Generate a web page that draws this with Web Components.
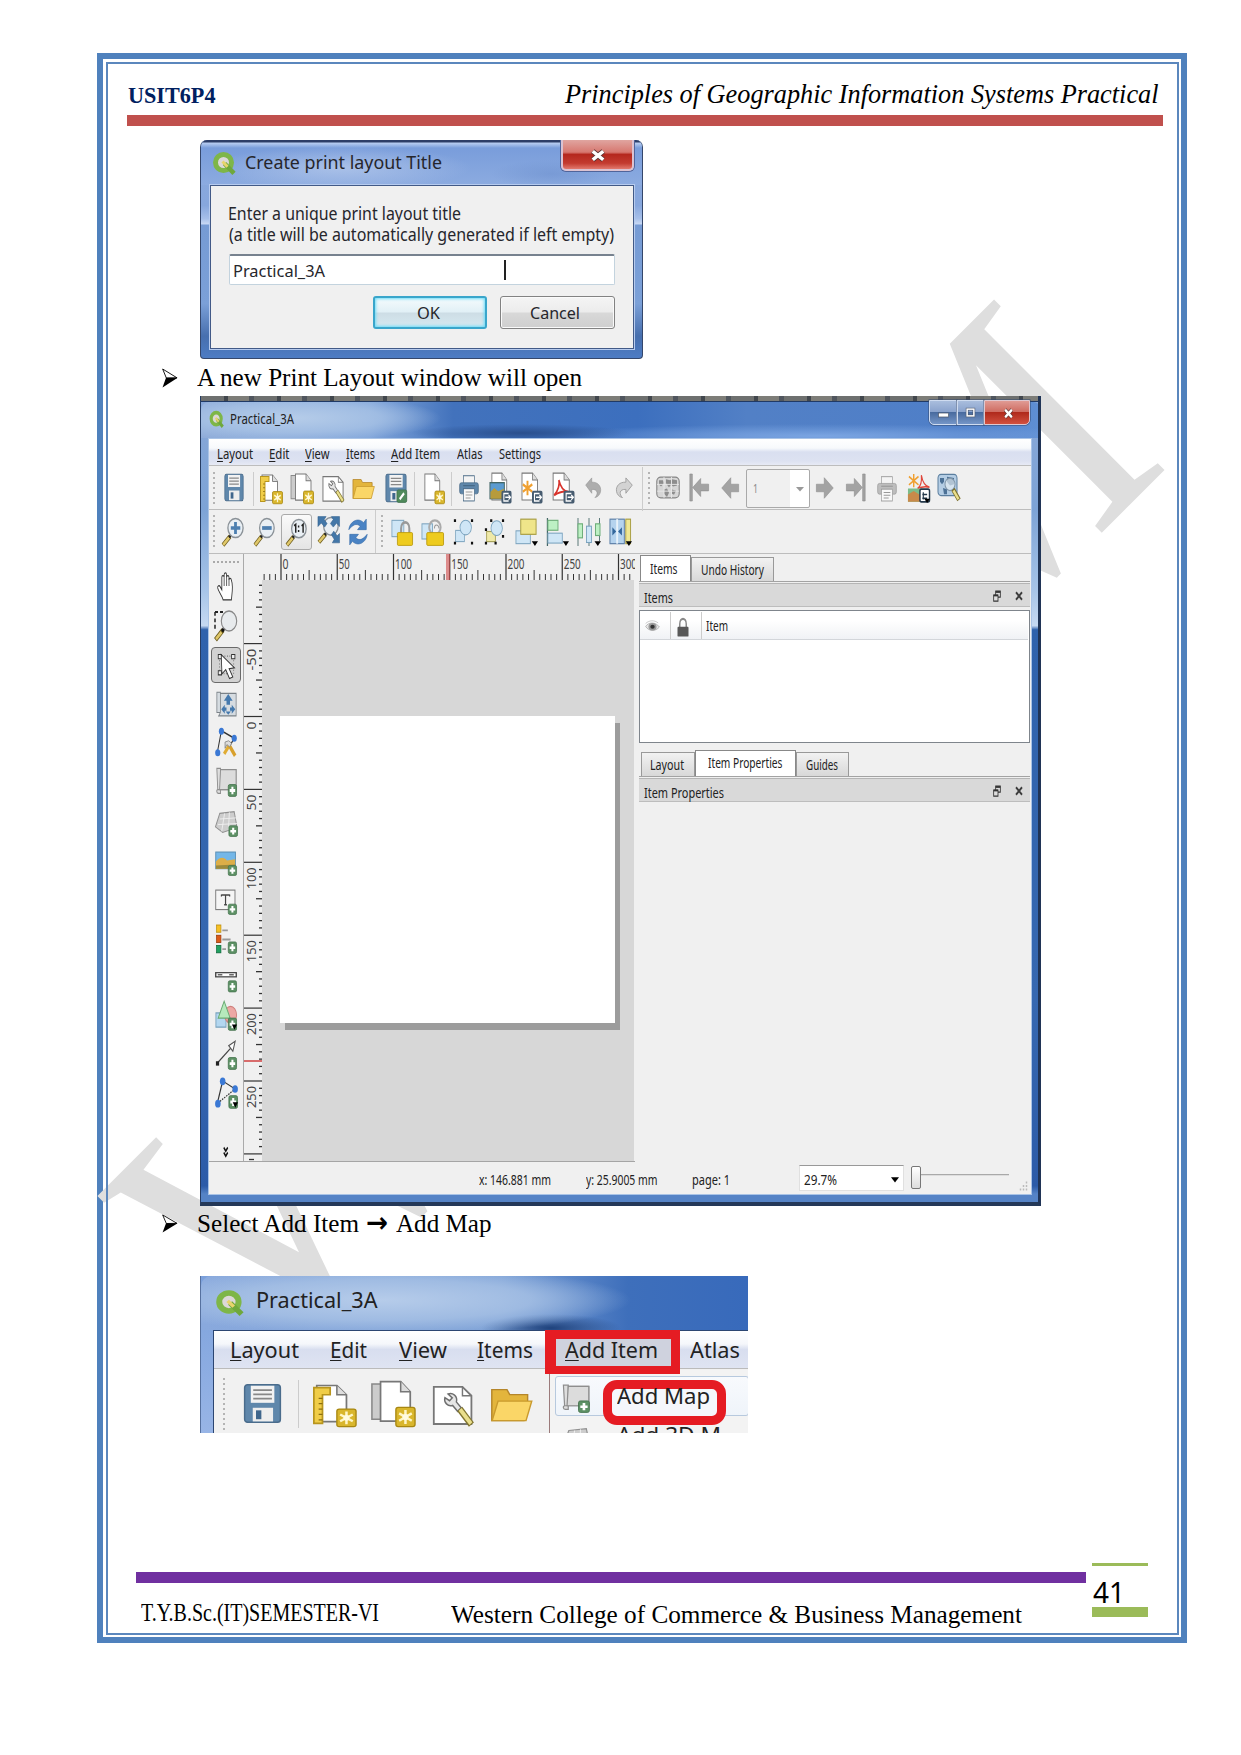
<!DOCTYPE html>
<html lang="en">
<head>
<meta charset="utf-8">
<title>USIT6P4</title>
<style>
html,body{margin:0;background:#fff}
body{width:1241px;height:1755px;overflow:hidden;font-family:"Liberation Serif",serif;color:#000}
</style>
</head>
<body>
<doc-page></doc-page>
<script>
/* Text squeezed or stretched horizontally to an exact width. */
class FitText extends HTMLElement{
  connectedCallback(){
    const s=+this.getAttribute('size'),w=+this.getAttribute('w');
    this.attachShadow({mode:'open'}).innerHTML=`<style>:host{display:block;flex:none;width:${w}px;height:${s}px;line-height:${s}px;font-size:${s}px;white-space:nowrap}
      span{display:inline-block;transform-origin:0 0}</style><span><slot></slot></span>`;
    const sp=this.shadowRoot.querySelector('span');
    const n=sp.getBoundingClientRect().width;
    if(n) sp.style.transform=`scaleX(${w/n})`;
  }
}
customElements.define('fit-text',FitText);

const SERIF='"Liberation Serif",serif', SANS='"Noto Sans","Open Sans",sans-serif';
const BASE={[SERIF]:.3375,[SANS]:.388};
/* Text item: left, width, baseline, size */
const T=(x,w,base,size,text,o={})=>{
  const f=o.f||SANS;
  return {x,w,y:base-size*(.5+BASE[f]),html:m=>`<fit-text w="${w}" size="${size}" style='${m};font-family:${f};${o.s||''}'>${text}</fit-text>`};
};
const I=(name,x,y,w,h)=>({x,y,w,html:m=>`<ui-icon name="${name}" style="${m};width:${w}px;height:${h}px"></ui-icon>`});
const B=(x,y,w,h,css,inner='')=>({x,y,w,html:m=>`<div style="${m};flex:none;box-sizing:border-box;width:${w}px;height:${h}px;${css}">${inner}</div>`});
/* Lays items left to right inside a flex row whose origin is (x0,y0). */
const row=(x0,y0,items)=>{let c=x0;return items.map(i=>{const m=`margin-left:${i.x-c}px;margin-top:${i.y-y0}px`;c=i.x+i.w;return i.html(m)}).join('')};
const R=(x0,y0,w,h,css,items)=>`<div style="display:flex;align-items:flex-start;flex:none;box-sizing:border-box;width:${w}px;height:${h}px;${css}">${row(x0,y0,items)}</div>`;

const plus='<rect x="14.5" y="14" width="9" height="9.5" rx="1.5" fill="#5d9165" stroke="#41704a" stroke-width=".7"/><path d="M19 15.8v6M16 18.8h6" stroke="#fff" stroke-width="2.2"/>';
const plusD=plus+'<path d="M18.5 19h5.5l-2.7 4z" fill="#000"/>';
const star='<rect x="13.5" y="14" width="10" height="9.8" rx="1.2" fill="#d9b62c" stroke="#a88710" stroke-width=".7"/><path d="M18.5 15.3v7.2M15.2 17l6.6 3.8M21.8 17l-6.6 3.8" stroke="#fff6c8" stroke-width="1.3"/><circle cx="18.5" cy="18.9" r="1.6" fill="#fffbe0"/>';
const exp='<rect x="13" y="14" width="10.5" height="9.7" rx="1.5" fill="#475c70"/><path d="M20.5 16.2h-5v5.5h5M17 19h5.2M20.4 17.2l2 1.8-2 1.8" stroke="#fff" stroke-width="1.1" fill="none"/>';
const page='<path d="M3 .8h10.5l5 5.2v15H3z" fill="#fff" stroke="#777" stroke-width=".9"/><path d="M13.5.8V6h5" fill="#ddd" stroke="#777" stroke-width=".8"/>';
const floppy='<rect x="1" y="1" width="22" height="22" rx="1.8" fill="#5f87ab" stroke="#4a6c8c" stroke-width=".9"/><rect x="4.8" y="1.6" width="14.5" height="10" fill="#f2f2f2"/><path d="M6.3 4.2h11.5M6.3 6.7h11.5M6.3 9.2h11.5" stroke="#888" stroke-width="1"/><rect x="6" y="14.5" width="12.5" height="8" fill="#eee"/><rect x="8" y="16" width="3.3" height="5.2" fill="#3f668c"/>';
const lens='<path d="M9 15.5l-7 7" stroke="#6b5a1c" stroke-width="3.8"/><path d="M8.2 16.3l-6 6" stroke="#e0c86a" stroke-width="2.3"/><path d="M10 14.3l-2 2" stroke="#222" stroke-width="2.2"/><circle cx="14.5" cy="8.8" r="7.6" fill="#e9eff4" stroke="#8a9197" stroke-width="1.3"/>';
const printer=(c,d)=>`<rect x="5.5" y="1.5" width="13" height="8" fill="#f4f4f4" stroke="${d}" stroke-width=".8"/><rect x=".8" y="7.5" width="22.4" height="9.5" rx="2" fill="${c}" stroke="${d}" stroke-width=".7"/><path d="M5 10h14" stroke="${d}"/><rect x="5.5" y="12.6" width="13" height="10.5" fill="#f8f8f8" stroke="${d}" stroke-width=".8"/><path d="M8 15.5h8M8 18h8M8 20.5h6" stroke="#999" stroke-width=".9"/>`;
const arrow='fill="#a3a3a3" stroke="#8a8a8a" stroke-width=".6"';
const blue='fill="#cfe6f6" stroke="#7ba3be" stroke-width=".9"';
const drop='<path d="M17.5 20h6.5l-3.2 4z" fill="#000"/>';
const ICONS={
 q:'<circle cx="11.5" cy="11.5" r="8" fill="#ddd8d8" stroke="#7eb648" stroke-width="5"/><path d="M12.5 12.5l9.5 9.8" stroke="#6fa83c" stroke-width="4.6"/><path d="M10.5 10.5l5 5.2" stroke="#e8d46c" stroke-width="3"/>',
 save:floppy,
 saveas:floppy+'<rect x="13" y="13.5" width="10.7" height="10" rx="1.5" fill="#4f8a5b" stroke="#376a42" stroke-width=".6"/><path d="M16 21l4.8-4.8" stroke="#fff" stroke-width="2"/>',
 newlayout:page+'<path d="M1.5 2h8.5v4H6v16H1.5z" fill="#f0cd48" stroke="#b8951d" stroke-width=".9"/><path d="M4 8h2M4 11h2M4 14h2M4 17h2M4 20h2" stroke="#8a6e10" stroke-width=".7"/>'+star,
 dup:'<path d="M1 2h14v18H1z" fill="#ccc" stroke="#888" stroke-width=".8"/><g transform="translate(2.5 0)">'+page+'</g>'+star,
 manager:'<path d="M1 3.5h16l5 4.5v14.500H1z" fill="#fff" stroke="#777"/><path d="M17 3.500V8h5" fill="none" stroke="#777" stroke-width=".8"/><path d="M9 7.2c2.500-1 5.500 1.200 4.600 4l2.700 3-2 1.800-2.800-3c-2.700.8-5-1.600-4.300-4l2.600 1.600 1.500-1.500z" fill="#e6e6e6" stroke="#6e6e6e" stroke-width=".8"/><path d="M15.500 14.800l6.500 8" stroke="#81752f" stroke-width="3.600"/><path d="M15.700 15l6 7.300" stroke="#eadf8c" stroke-width="2.100"/>',
 folder:'<path d="M1 3.500h8.500l1.500 3h10v4l-2 12H1z" fill="#e3b53c" stroke="#b5862a" stroke-width=".8"/><path d="M4.500 10.500H23.300l-3.200 12H1.200z" fill="#fad667" stroke="#c99a2d" stroke-width=".8"/>',
 newpage:page+star,
 print:printer('#5f87ab','#466784'),
 printg:printer('#bdbdbd','#999'),
 eximg:page+'<rect x="1" y="8" width="15" height="12" fill="#5b9bd0" stroke="#466"/><path d="M1.500 20v-5l4-3 4 2.500 6-2V20z" fill="#b79b3c"/>'+exp,
 exsvg:page+'<path d="M8.500 6.500v11M3.800 9.300l9.500 5.500M13.300 9.300l-9.500 5.500" stroke="#f0a030" stroke-width="1.900"/>'+exp,
 expdf:page+'<path d="M4 17.500C8 14 9.500 9 8.500 6c1.500 5 4 8.500 9 8.800-5-.6-9 .3-13.500 2.700z" fill="none" stroke="#d8332c" stroke-width="1.500"/>'+exp,
 undo:'<path d="M1 9.500L9.500 2v4.500C18 6 23 10.500 22 16c-.6 3-3.500 6-8 6.500 4.500-3 5-9-4.500-8.500V18z" fill="#adadad" stroke="#929292" stroke-width=".7"/>',
 redo:'<path d="M23 9.500L14.500 2v4.500C6 6 1 10.500 2 16c.6 3 3.500 6 8 6.500C5.500 19.500 5 13.500 14.500 14V18z" fill="#d3d3d3" stroke="#9a9a9a" stroke-width="1"/>',
 map:'<rect x=".8" y="2" width="22.400" height="20" rx="4" fill="#d6d6d6" stroke="#858585" stroke-width="1.100"/><path d="M3 5h4l1 3-3 3-2-2M10 4l4 1 2-1 5 1v5l-4 1-2-2-2 3-3-4zM8 14l3-1 2 4-2 4-3-3zM16 14l4 1-2 4-2-1z" fill="#8d8d8d"/><path d="M1 9h22M1 15.500h22M8 2v20M15.500 2v20" stroke="#e8e8e8" stroke-width=".9"/>',
 first:`<path d="M1 0h3v24H1z" ${arrow}/><path d="M4.500 12L14 4v5h9.500v6H14v5z" ${arrow}/>`,
 prev:`<path d="M1 12L13 2.500v6h10.500v7H13v6z" ${arrow}/>`,
 next:`<path d="M23 12L11 2.500v6H.5v7H11v6z" ${arrow}/>`,
 last:`<path d="M20 0h3v24h-3z" ${arrow}/><path d="M19.500 12L10 4v5H.5v6H10v5z" ${arrow}/>`,
 atlas:'<path d="M7 0v11M2 2l10 7M12 2L2 9" stroke="#f0a030" stroke-width="1.500"/><path d="M11 12c4-2 4.500-6 4-11 1 5 3 9 8.500 10-5-1-8-.5-12.500 1z" stroke="#e0463a" fill="none" stroke-width="1.200"/><path d="M1 12h14v11H1z" fill="#7bbd8a"/><path d="M1 17l6-3 8 4v5H1z" fill="#c88a4a"/><rect x="13.500" y="12.500" width="10" height="10.500" rx="1.500" fill="#fff" stroke="#24384a" stroke-width="1.500"/><path d="M16 17h5M16 20h5M17 15v6" stroke="#24384a" stroke-width="1.200"/><path d="M18 20.500h6l-3 3.500z" fill="#000"/>',
 atlasz:'<rect x="1" y="1" width="19" height="17" rx="3" fill="#b4cde4" stroke="#5b7e9e"/><path d="M3 4h4v3l-2 2-2-2zM10 3l7 1v5l-4 1-3-3zM6 12l4 1v4H7z" fill="#4c7196"/><circle cx="13" cy="9" r="5" fill="#e8eff5" fill-opacity=".65" stroke="#8095a8"/><path d="M16 13l6 8.500" stroke="#7c702c" stroke-width="4"/><path d="M16.500 14l5 7" stroke="#eadf8c" stroke-width="2.400"/>',
 zin:lens+'<path d="M14.500 4v9.600M9.800 8.800h9.500" stroke="#4d7fb0" stroke-width="2.800"/>',
 zout:lens+'<path d="M9.500 8.800h10" stroke="#4d7fb0" stroke-width="3"/>',
 z11:lens+'<path d="M9.500 6.500l1.700-1.200v7M17.300 6.500l1.600-1.200v7" fill="none" stroke="#222" stroke-width="1.500"/><path d="M14.200 6.300v1.500M14.200 10v1.500" stroke="#222" stroke-width="1.500"/>',
 zfull:lens+'<path d="M1 .5h8.500L7.500 3l3 3.500L8 9.500 4.500 6 1 9zM23.500.5h-8.500L17 3l-3 3.500L17 9.500l3.500-3.500 3 3zM23.500 23v-8L21 17l-3.500-4-2.500 3 3 4-2 3z" fill="#4377a8" stroke="#315f8c" stroke-width=".5"/>',
 refresh:'<path d="M2 10C3 3 12-1 18 4l3-3v9h-9.500l3-3C10 4 6 6 2 10z" fill="#4a83c4" stroke="#3268a6" stroke-width=".6"/><path d="M22 14c-1 7-10 11-16 6l-3 3v-9h9.500l-3 3c4.500 3 8.500 1 12.500-3z" fill="#4a83c4" stroke="#3268a6" stroke-width=".6"/>',
 lock:`<rect x="1" y="2" width="13" height="14" ${blue}/><path d="M11 14V9c0-7 9-7 9 0v5" fill="none" stroke="#999" stroke-width="2.200"/><rect x="7" y="12.500" width="16.500" height="11" rx="1" fill="#eecb1e" stroke="#b8980c" stroke-width=".8"/>`,
 unlock:`<rect x="1" y="5" width="11" height="13" ${blue}/><circle cx="14.500" cy="8" r="6" fill="none" stroke="#aaa" stroke-width="2"/><path d="M14 9c0-4 4-4 5 0" fill="none" stroke="#999"/><rect x="6" y="12.500" width="17.500" height="11" rx="1" fill="#eecb1e" stroke="#b8980c" stroke-width=".8"/>`,
 group:`<rect x="3" y="11" width="10" height="10" ${blue}/><circle cx="14.500" cy="8.500" r="6.500" ${blue}/><path d="M1 1h2.500v2.500H1zM20.500 1H23v2.500h-2.500zM1 21h2.500v2.500H1zM20.500 21H23v2.500h-2.500z" fill="#111"/>`,
 ungroup:`<rect x="3" y="12" width="10" height="9" fill="#efe9a8" stroke="#a59f56"/><circle cx="14.500" cy="9" r="6.500" ${blue}/><path d="M7 1h2.500v2.500H7zM20.500 1H23v2.500h-2.500zM1 9h2.500v2.500H1zM1 21h2.500v2.500H1zM12 21h2.500v2.500H12zM20.500 15H23v2.500h-2.500z" fill="#111"/>`,
 raise:`<rect x="1" y="11" width="15" height="11" ${blue}/><rect x="6" y="1" width="16" height="13" fill="#efe58a" stroke="#a89d42"/>`+drop,
 align:`<path d="M1.500 0v24" stroke="#466" stroke-width="1.300"/><rect x="2" y="2" width="10.500" height="8.500" fill="#bdf0c4" stroke="#6fae7a"/><rect x="2" y="13" width="15" height="8.500" ${blue}/>`+drop,
 distrib:`<path d="M1 0v24M12 0v24M22.500 0v20" stroke="#466" stroke-width=".8"/><rect x="1" y="5" width="4.500" height="12" fill="#bdf0c4" stroke="#6fae7a"/><rect x="9.500" y="7" width="5" height="14" ${blue}/><rect x="18.500" y="5" width="4.500" height="10" fill="#bdf0c4" stroke="#6fae7a"/>`+drop,
 resize:`<rect x="1" y="1" width="15" height="21" fill="#b5d3ee" stroke="#5b7ea6"/><path d="M8.500 1v21" stroke="#e8f2fa" stroke-width="2"/><path d="M7.500 11.500l-4-3.500v7zM9.500 11.500l4-3.500v7z" fill="#34679c"/><rect x="17.500" y="1" width="5" height="21" fill="#f0e894" stroke="#a89d42"/>`+drop,
 hand:'<path d="M8.500 23c-1-3-6-7-6.500-9.500-.3-2 2-2.200 3-.9l2 2.400V5c0-1.800 2.600-1.800 2.800 0V3c0-2 2.700-2 2.900 0v2c.2-1.800 2.700-1.600 2.900 0v2c.3-1.600 2.700-1.400 2.900.4C21 12 19 19 18.500 23z" fill="#fff" stroke="#333" stroke-width="1"/><path d="M9.800 5v7M12.700 4v8M15.600 6v6" stroke="#444" stroke-width=".8"/>',
 lensbox:'<path d="M1 1.500h9M1 1.500V16" fill="none" stroke="#222" stroke-width="1.500" stroke-dasharray="3 2"/><path d="M9 15.500L1.500 23" stroke="#6b5a1c" stroke-width="4"/><path d="M7.500 17.200L2 22.500" stroke="#e0c86a" stroke-width="2.400"/><path d="M10.500 14L8 16.500" stroke="#111" stroke-width="2.800"/><circle cx="15" cy="8.500" r="7.700" fill="#e8ebed" stroke="#888" stroke-width="1.100"/>',
 select:'<path d="M3 3h17v17H3z" fill="none" stroke="#666" stroke-dasharray="1 2"/><path d="M1.500 1.500h4v4h-4zM17.500 1.500h4v4h-4zM1.500 17h4v4h-4z" fill="#eee" stroke="#333"/><path d="M5 1.500l1 18.500 4.500-4 4.500 8.500 4-1.500-4.500-8 6.500-.8z" fill="#fff" stroke="#333" stroke-width="1"/>',
 movec:'<path d="M1 2h4v18H1zM5 3h18v20H3l2-3z" fill="#d6dce1" stroke="#7b8288" stroke-width=".9"/><path d="M14 3.500l5 6h-3V13h-4V9.500H9zM14 22l-3-3h6zM6 17l4-4v2.500h2v3h-2V21zM22 17l-4-4v2.500h-2v3h2V21z" fill="#4579ad"/>',
 node:'<path d="M7 3L2.500 20.500M7 3l14 6M21 9l-4 5" fill="none" stroke="#333" stroke-width="1.100"/><circle cx="7" cy="3.300" r="2.800" fill="#3a78d4"/><circle cx="21" cy="9" r="2.800" fill="#3a78d4"/><circle cx="3" cy="20.500" r="2.800" fill="#3a78d4"/><path d="M10 21.500l6-7.500" fill="none" stroke="#e0ac34" stroke-width="3.200"/><path d="M15 14l7 9" fill="none" stroke="#d8a02c" stroke-width="3.400"/><path d="M11 12l4-1 3 2-2 3-3-2-2 3z" fill="#ddd" stroke="#888" stroke-width=".8"/>',
 addmap:'<path d="M2 1h4v20H3.500C1.500 21 1.500 18 3 18zM6 2h17v16H3.500" fill="#dedede" stroke="#8e8e8e" stroke-width="1"/><path d="M6 2h17v16H5z" fill="#dcdcdc" stroke="#8e8e8e"/>'+plus,
 add3d:'<path d="M5 3l15 -1.500 3 14L8 20 0.500 15z" fill="#cdcdcd" stroke="#909090"/><path d="M5 8l17-1M3 13l20-1M10 3l-3 16M15 2l-1 16" stroke="#f2f2f2" stroke-width=".8"/>'+plus,
 addpic:'<rect x=".8" y="1" width="21.500" height="16" fill="#74b7e8" stroke="#5a8fb5"/><path d="M1 10c5-5 9-4 12-1l9-1v9H1z" fill="#dcae48"/><path d="M1 14l21-1v4H1z" fill="#9a8a3d"/>'+plus,
 addlabel:'<rect x=".8" y="1" width="21" height="18" fill="#f5f5f5" stroke="#777"/><path d="M7 5.500h9M11.500 5.500v9M7 5v2M16 5v2M10 14.500h3" stroke="#444" stroke-width="1.300"/>'+plus,
 addlegend:'<rect x="1.500" y="0" width="5" height="6" fill="#f6c024" stroke="#b98c10" stroke-width=".7"/><rect x="1.500" y="8.500" width="5" height="6" fill="#db5a18" stroke="#983c0c" stroke-width=".7"/><rect x="1.500" y="17" width="5" height="6" fill="#20a060" stroke="#10683c" stroke-width=".7"/><path d="M8 4.500h6M8 12h9M8 20h4" stroke="#9a9a9a" stroke-width="1.500"/>'+plus,
 addscale:'<rect x=".8" y=".8" width="22.400" height="5" fill="#fff" stroke="#444" stroke-width="1.500"/><path d="M3 3.300h5M15.500 3.300h5" stroke="#666" stroke-width="1.700"/><g transform="translate(0 -9) scale(1 1.400)">'+plus+'</g>',
 addshape:`<rect x="1" y="10" width="11" height="11" fill="#b3d7f0" stroke="#7ba3be"/><circle cx="17" cy="11.500" r="6.500" fill="#eda8a4" stroke="#ce7f7b"/><path d="M10 1L16.500 14h-13z" fill="#b6eabc" stroke="#6aab73"/>`+plusD,
 addarrow:'<path d="M2.500 18.500L19 5" stroke="#444" stroke-width="1.100"/><rect x="1" y="17" width="3.500" height="3.500" fill="#222"/><path d="M22 1l-2.500 8-4.500-4.500z" fill="#fff" stroke="#555" stroke-width="1.100"/>'+plus,
 addnode:'<path d="M8 3L2.500 19.500" stroke="#333" stroke-width="1.200"/><path d="M8 3l13 6" stroke="#333"/><path d="M3 19.500L21 9" stroke="#333" stroke-dasharray="1.500 1"/><circle cx="8" cy="3.200" r="2.900" fill="#3a78d4"/><circle cx="21" cy="9" r="2.900" fill="#3a78d4"/><circle cx="3" cy="20" r="2.900" fill="#3a78d4"/>'+plusD,
 chev:'<path d="M3 1l8 8 8-8M3 12l8 8 8-8" fill="none" stroke="#111" stroke-width="5"/>',
 float:'<path d="M8 2h14v12H8z" fill="none" stroke="#333" stroke-width="2.500"/><path d="M8 4h14" stroke="#333" stroke-width="3.500"/><path d="M2 10h13v12H2z" fill="#ddd" stroke="#333" stroke-width="2.500"/><path d="M2 11h13" stroke="#333" stroke-width="3.500"/>',
 x:'<path d="M3 3l18 18M21 3L3 21" stroke="#3c3c3c" stroke-width="5.500"/>',
 wx:'<path d="M3 4l18 16M21 4L3 20" stroke="#5c3434" stroke-width="9"/><path d="M3 4l18 16M21 4L3 20" stroke="#fff" stroke-width="6"/>',
 wmin:'<rect x="1" y="14" width="22" height="8" fill="#fff" stroke="#4a5568" stroke-width="1.500"/>',
 wmax:'<rect x="3" y="3" width="18" height="18" fill="none" stroke="#4a5568" stroke-width="7"/><rect x="3" y="3" width="18" height="18" fill="none" stroke="#fff" stroke-width="4"/>',
 eye:'<path d="M1 11C6 3 17 3 23 12 17 20 6 20 1 11z" fill="#e5e5e5" stroke="#999"/><path d="M1 6C7 0 15 0 21 5" fill="none" stroke="#aaa"/><circle cx="12" cy="11.500" r="6.500" fill="#999"/><circle cx="12" cy="11.500" r="3.500" fill="#333"/>',
 pad:'<path d="M5.500 12V7.500c0-8.500 13-8.500 13 0V12" fill="none" stroke="#8a8a8a" stroke-width="3"/><rect x="1" y="11" width="22" height="12.500" rx="1.500" fill="#585858"/>',
 bullet:'<path d="M1 1.200L22.500 11.800 6.500 12z" fill="#fff" stroke="#000" stroke-width="1.200"/><path d="M6 11.700H23.500L.8 23.500z" fill="#000"/>',
 corner:'<path d="M18 3h4v4h-4zM18 10h4v4h-4zM10 10h4v4h-4zM18 17h4v4h-4zM10 17h4v4h-4zM2 17h4v4H2z" fill="#bbb"/>',
 tri:'<path d="M0 4h24L12 22z" fill="currentColor"/>'
};
class UiIcon extends HTMLElement{connectedCallback(){this.attachShadow({mode:'open'}).innerHTML=`<style>:host{display:block;flex:none}svg{display:block;width:100%;height:100%;overflow:visible}</style><svg viewBox="0 0 24 24" preserveAspectRatio="none">${ICONS[this.getAttribute('name')]}</svg>`}}
customElements.define('ui-icon',UiIcon);

const el=(name,css,html)=>customElements.define(name,class extends HTMLElement{connectedCallback(){this.attachShadow({mode:'open'}).innerHTML=`<style>:host{display:block;box-sizing:border-box;flex:none}u{text-decoration-thickness:1px;text-underline-offset:2px}${css}</style>${html}`}});

/* Title prompt dialog, 443 x 219 at (200,140) */
const btn='border-radius:3px;display:flex;';
el('print-dialog',`:host{width:443px;height:219px;background:linear-gradient(180deg,#8aa9dc 0,#87a7dd 30%,#a6bfe9 36%,#c8d8f4 38.500%,#769bd4 39%,#7ba0d8 75%,#476fae 90%,#4d7cc4 100%);border:1px solid #35476b;border-top:0;border-radius:7px 7px 4px 4px;overflow:hidden;color:#26262c}`,
 R(201,140,441,45,'background:radial-gradient(ellipse 130px 22px at 140px 28px,#c3d3ef99,#c3d3ef00),radial-gradient(ellipse 60px 14px at 350px 34px,#6488c866,#6488c800),linear-gradient(#2d3e68 0,#2d3e68 2px,#b7cdf1 3px,#799ddb 8px,#8cabe0)',[
  I('q',212,151,24,24),T(244.5,197,169,18.5,'Create print layout Title'),
  B(561,140,73,31,'border:2px solid #dbc2d1;border-top:0;border-radius:0 0 5px 5px;background:linear-gradient(#e0a5a0,#d77870 42%,#b5281e 50%,#c33b30 80%,#e2796e);box-shadow:0 0 0 1px #50649a;display:flex;justify-content:center;padding-top:9px','<ui-icon name="wx" style="width:14px;height:13px"></ui-icon>')])+
 `<div style="margin-left:9px;width:424px;height:164px;box-sizing:border-box;border:1.500px solid #425a87;outline:1px solid #b6cbef;background:#f0f0f0">`+
 R(211,186,420,40,'',[T(228,233,221,17.500,'Enter a unique print layout title')])+
 R(211,226,420,20,'',[T(229,385,241.500,17.500,'(a title will be automatically generated if left empty)')])+
 R(211,246,420,46,'',[B(229,254,386,31,'background:#fff;border:1px solid #c3d3de;border-top:2px solid #77828f;border-radius:2px;display:flex',
   row(230,256,[T(232.500,92,277.500,17,'Practical_3A'),B(504,260,1.500,20,'background:#222')]))])+
 R(211,292,420,45,'',[B(373,296,114,33,btn+'border:2px solid #3aa6cb;background:linear-gradient(#f4fbfd,#e1f0f6 48%,#cddde5 52%,#d6e9f0);box-shadow:inset 0 0 3px 1px #6ddcf8',row(375,298,[T(417,23,319.500,16.500,'OK')])),
   B(499.500,296,115,33,btn+'border:1.500px solid #828282;background:linear-gradient(#f4f4f4,#ececec 48%,#d8d8d8 52%,#cfcfcf);box-shadow:inset 0 0 0 1px #fafafa',row(500.500,297,[T(529.500,50,319.500,16.500,'Cancel')]))])+
 `</div>`);

/* Scale rulers */
let hr='',vr='';
for(let i=-3;i<=62;i++){const x=281+i*5.625-263;if(x<0||x>371)continue;const M=i%10===0,H=i%5===0;hr+=`<path d="M${x} ${M?0:H?16:20}V26" stroke="#333" stroke-width="${M?1.200:1}"/>`;if(M)hr+=`<text x="${x+1.500}" y="15" textLength="${i===0?6:i===10?11:17}" lengthAdjust="spacingAndGlyphs">${i*5}</text>`}
hr+='<path d="M184 0V26M186 0V26" stroke="#d04848" stroke-width="1.200"/>';
for(let i=-18;i<=61;i++){const y=716.500+i*7.290-580;if(y<0||y>581)continue;const M=i%10===0,H=i%5===0;vr+=`<path d="M${M?0:H?12:15} ${y}H19" stroke="#333" stroke-width="${M?1.200:1.300}"/>`;if(M&&i<60){const n=String(i*5),L=n.length===1?8:n.length===2?16:22;vr+=`<text transform="translate(11.500 ${y+5+L}) rotate(-90)" textLength="${L}" lengthAdjust="spacingAndGlyphs">${n}</text>`}}
vr+='<path d="M5 579.500h5" stroke="#333" stroke-width="1.300"/><path d="M0 481H19" stroke="#d04040" stroke-width="1.500"/>';
el('ruler-x',`:host{width:372px;height:26px;background:#f0f0f0}svg{display:block}text{font:13.500px ${SANS};fill:#444}`,`<svg width="372" height="26">${hr}</svg>`);
el('ruler-y',`:host{width:19px;height:581px;background:#f0f0f0;border-left:1px solid #aaa}svg{display:block;overflow:visible}text{font:13px ${SANS};fill:#444}`,`<svg width="18" height="581">${vr}</svg>`);

const tb=[['hand',571,30,20],['lensbox',610,31,24],['select',647,36,30],['movec',690,27,21],['node',727,30,22],['addmap',767,30,22],['add3d',810,27,23],['addpic',851,25,22],['addlabel',889,26,22],['addlegend',925,29,22],['addscale',972,20,22],['addshape',1000,31,22],['addarrow',1040,30,22],['addnode',1077,32,23],['chev',1147,11,6]];
let ty=554;const tools='<div style="width:26px;height:1px;margin:7px 0 -10px;border-top:2px dotted #aaa"></div>'+tb.map(([n,y,h,w])=>{const m=y-ty;ty=y+h;
 return n==='select'?`<div style="box-sizing:border-box;margin-top:${m}px;width:30px;height:36px;border:1.500px solid #6a6a6a;border-radius:4px;background:#d2d2d2;padding:5px"><ui-icon name="select" style="width:20px;height:25px"></ui-icon></div>`:`<ui-icon name="${n}" style="margin-top:${m}px;width:${w}px;height:${h}px"></ui-icon>`}).join('');
const sep=(x,y,h)=>B(x,y,1,h,'background:#ccc');
const gr=(x,y,h)=>B(x,y,2,h,'background:repeating-linear-gradient(#b4b4b4 0 2px,transparent 2px 5px)');
const tabOff='background:linear-gradient(#f2f2f2,#e6e6e6 45%,#d8d8d8);border:1px solid #999;border-bottom:0;display:flex;',tabOn='background:#fff;border:1px solid #888;border-bottom:0;display:flex;';
const head=(y,w,text)=>R(639,y,391,24,'background:#d9d9d9;border-top:1px solid #b5b5b5;border-bottom:1px solid #bdbdbd',[T(644,w,y+18.500,14.500,text),I('float',993,y+6,8,12),I('x',1015,y+7,8,10)]);
const menu=(b,s,a)=>a.map(([x,w,t])=>T(x,w,b,s,t));
const cap='linear-gradient(#a9bddd,#8aa3cd 46%,#496b9f 50%,#7495c7);box-shadow:0 0 0 .5px #33486f';
el('layout-window',`:host{width:841px;height:810px;overflow:hidden;color:#222;background:linear-gradient(#89a8d8 0,#7da3d6 14%,#a6c4e8 24%,#c6d9f2 28.500%,#2f62ac 29%,#3668b1 75%,#2c5ba8 98%,#5583c6 99%);border-left:1px solid #263c62;border-right:3px solid #203456;border-bottom:4px solid #243858;position:relative}
 .body{margin:1px 0 0 8px;width:822px;height:755px;background:#f0f0f0;outline:1px solid #a9c3e6}`,
 `<div style="height:5px;background:repeating-linear-gradient(90deg,#6e706f 0 23px,#42474d 23px 27px,#7d7d78 27px 48px,#50565e 48px 53px);border-bottom:1px solid #203a66;margin-right:-3px"></div>`+
 R(201,402,840,36,'border-radius:8px 8px 0 0;background:radial-gradient(ellipse 150px 24px at 90px 16px,#b9cfeaee 0,#a7c2e5cc 60%,#7ea4db00),radial-gradient(ellipse 110px 9px at 320px 31px,#2a4f8d,#2a4f8d00),radial-gradient(ellipse 280px 12px at 620px 34px,#7ba5e2,#7ba5e200),linear-gradient(90deg,#8facd9 0,#83a7db 20%,#4272bc 30%,#3c6fbe 52%,#5280c6 65%,#4f7fc8 90%,#5f8fd4)',[
  I('q',209,410,15,18),T(230,64,424.500,15,'Practical_3A'),
  B(929,400,28,25,`border:1px solid #cfdcf0;border-radius:0 0 0 5px;background:${cap};padding:5px 0 0 8px`,'<ui-icon name="wmin" style="width:11px;height:12px"></ui-icon>'),
  B(957,400,27,25,`border:1px solid #cfdcf0;background:${cap};padding:7px 0 0 8px`,'<ui-icon name="wmax" style="width:9px;height:9px"></ui-icon>'),
  B(984,400,46,25,'border:1px solid #dfc8d0;border-radius:0 0 5px 0;background:linear-gradient(#e09b94,#cf6d62 46%,#b02a1c 50%,#d1503f);box-shadow:0 0 0 .5px #33486f;padding:7px 0 0 19px','<ui-icon name="wx" style="width:9px;height:11px"></ui-icon>')])+
 `<div class="body">`+
 R(209,439,822,26,'background:linear-gradient(#fff 0,#f7f9fc 35%,#d9dff0 50%,#dde2f1 85%,#e7eaf5)',menu(458.500,14.500,[[216.500,36,'<u>L</u>ayout'],[268.500,20.500,'<u>E</u>dit'],[305,24.500,'<u>V</u>iew'],[346,29,'<u>I</u>tems'],[391,49,'<u>A</u>dd Item'],[456.500,25.500,'Atlas'],[498.500,42,'Settings']]))+
 R(209,465,822,45,'border-top:1px solid #bdbdbd;border-bottom:1px solid #bdbdbd',[gr(213,471,34),I('save',224,472,20,29),sep(253,471,34),I('newlayout',259,473,24,30),I('dup',290,472,24,31),I('manager',322,471,23,31),I('folder',352,475,23,24),I('saveas',385,472,22,30),sep(414,471,34),I('newpage',422,472,23,31),sep(451,471,34),I('print',459,473,20,28),I('eximg',489,471,23,32),I('exsvg',519,471,24,32),I('expdf',550,471,25,32),I('undo',585,475,17,23),I('redo',615,475,18,23),sep(642,466,44),gr(648,471,34),I('map',656,474,24,25),I('first',689,473,20,27),I('prev',721,474,18,26),
   B(746,468,64,39,'background:linear-gradient(90deg,#f0f0f0 70%,#fff 70%);border:1.500px solid #a9a9a9;border-radius:2px;display:flex',row(747.500,469.500,[T(753,5,493,13,'1',{s:'color:#888'}),B(796,485,8,6,'color:#999','<ui-icon name="tri" style="width:8px;height:6px"></ui-icon>')])),
   I('next',816,474,18,26),I('last',846,473,20,27),I('printg',877,474,20,27),I('atlas',907,473,23,29),I('atlasz',937,472,24,30)])+
 R(209,510,822,44,'border-bottom:1px solid #bdbdbd',[gr(213,515,34),I('zin',221,517,24,30),I('zout',253,517,23,30),B(281,514,31,36,'border:1px solid #aaa;border-radius:3px;background:linear-gradient(#fafafa,#e4e4e4);padding:3px 0 0 3px','<ui-icon name="z11" style="width:23px;height:29px"></ui-icon>'),I('zfull',317,516,23,28),I('refresh',347,518,22,28),sep(375,510,43),gr(381,515,34),I('lock',391,518,22,28),I('unlock',421,518,23,28),I('group',453,518,21,27),I('ungroup',484,518,21,27),I('raise',515,518,23,28),I('align',546,518,23,28),I('distrib',577,518,24,28),I('resize',609,518,23,28)])+
 `<div style="display:flex;height:640px"><div style="display:flex;flex-direction:column;width:426px;flex:none"><div style="display:flex;height:607px;border-bottom:1px solid #a5a5a5"><div style="width:34px;flex:none;display:flex;flex-direction:column;align-items:center">${tools}</div>
  <div style="display:flex;flex-direction:column"><div style="display:flex"><div style="width:19px;height:26px;border-left:1px solid #aaa"></div><ruler-x></ruler-x></div>
  <div style="display:flex"><ruler-y></ruler-y><div style="width:372px;height:581px;background:#d7d7d7;overflow:hidden"><div style="margin:136px 0 0 18px;width:335px;height:307px;background:#fff;box-shadow:5px 7px 0 #9c9c9c"></div></div></div></div></div></div>
  <div style="margin-left:4px;width:391px">`+
  R(639,554,391,28,'border-bottom:1.500px solid #a3a3a3',[B(640,555,51,26,tabOn,row(641,556,[T(650,27.500,573.500,14.500,'Items')])),B(691,557,83,24,tabOff,row(692,558,[T(701,63,575,14.500,'Undo History')]))])+
  `<div style="height:1px"></div>`+head(583,29,'Items')+
  `<div style="margin-top:3px;height:133px;box-sizing:border-box;border:1.500px solid #7f858c;background:#fff">`+R(640,611,388,29,'background:linear-gradient(#fff 35%,#f0f2f5);border-bottom:1px solid #d3d6da',[I('eye',645,620,15,14),sep(670,612,27),I('pad',677,618,12,19),sep(701,612,27),T(706,22,631,14.500,'Item')])+`</div>`+
  R(639,743,391,34,'border-bottom:1.500px solid #a3a3a3',[B(641,752,54,24,tabOff,row(642,753,[T(650,34,770,14.500,'Layout')])),B(695,750,101,26,tabOn,row(696,751,[T(707.500,74.500,768,14.500,'Item Properties')])),B(796,752,53,24,tabOff,row(797,753,[T(806,32,770,14.500,'Guides')]))])+
  `<div style="height:1px"></div>`+head(778,80,'Item Properties')+
 `</div></div>`+
 R(209,1161,822,33,'margin-top:-33px;position:relative',[T(479,72,1184.500,14.500,'x: 146.881 mm'),T(586,71.500,1184.500,14.500,'y: 25.9005 mm'),T(691.500,38,1184.500,14.500,'page: 1'),
   B(799,1165,105,26,'background:#fff;border:1px solid #e0e0e0;border-top:1px solid #999;display:flex',row(800,1166,[T(804,33,1184.500,14.500,'29.7%'),B(891,1176,8,7,'color:#000','<ui-icon name="tri" style="width:8px;height:7px"></ui-icon>')])),
   B(911,1166,10,23,'border:1.500px solid #777;border-radius:2px;background:linear-gradient(#fff,#ddd)'),B(921,1174,88,2,'background:#a9a9a9;border-bottom:1px solid #ddd'),I('corner',1019,1180,9,12)])+`</div>`);

/* Cropped close-up of the menu, 548 x 157 at (200,1276) */
el('menu-closeup',`:host{width:548px;height:157px;overflow:hidden;position:relative;background:linear-gradient(#7ba0db,#98b5e6);color:#222;border-left:1px solid #56719f}`,
 R(201,1276,547,54,'border-radius:10px 0 0 0;background:radial-gradient(ellipse 250px 34px at 180px 24px,#b6ccea 0,#a4bfe4dd 60%,#7ea4db00),radial-gradient(ellipse 70px 14px at 350px 52px,#1f427c,#1f427c00),linear-gradient(90deg,#89a9dd,#7da1d6 55%,#3e6fbb 78%,#386abb)',[I('q',215,1289,29,27),T(255.500,121.500,1309,21,'Practical_3A')])+
 `<div style="margin-left:12px;width:535px;border-top:1.500px solid #2c4672;border-left:1.500px solid #2c4672;height:103px;background:#f1f1f1;box-sizing:border-box">`+
 R(214,1331,534,38,'background:linear-gradient(#fff,#f5f7fb 35%,#d8deef 50%,#dfe4f2);border-bottom:1px solid #bbb',menu(1359,21,[[230,69,'<u>L</u>ayout'],[330,37,'<u>E</u>dit'],[399,48,'<u>V</u>iew'],[477,56,'<u>I</u>tems']]).concat([B(545,1330,135,44,'border:solid #e51c23;border-width:9px 9px 8px 11px;background:#cfd2de;display:flex;position:relative;z-index:2',row(556,1339,[T(564.500,93,1359,21,'<u>A</u>dd Item')])),T(689.500,50,1359,21,'Atlas')]))+
 R(214,1369,534,64,'',[gr(223,1378,52),I('save',243,1383,39,41),sep(298,1380,48),I('newlayout',311,1384,46,43),I('dup',370,1380,46,47),I('manager',432,1380,43,47),I('folder',490,1384,43,39),
  B(549,1370,200,64,'border-left:1.500px solid #9b7b7b;background:#f3f3f3',
   R(550,1370,198,48,'',[B(555,1376,194,40,'border:1px solid #b7c9de;border-radius:3px;background:linear-gradient(#f8fafd,#eff4fa);display:flex',row(556,1377,[I('addmap',561,1384,29,29),B(602.500,1380,123,45,'border:9px solid #e51c23;border-radius:14px;background:#f5f7fb;display:flex;position:relative',row(611.500,1389,[T(616.500,93,1405,21,'Add Map')]))]))])+
   R(550,1418,198,16,'overflow:hidden',[I('add3d',563,1427,28,28),T(617,104,1443.500,21,'Add 3D M')]))])+`</div>`);

el('page-watermark',`:host{position:absolute;left:0;top:0;width:1241px;height:1755px}svg{display:block}text{font:361px "Liberation Serif",serif;fill:#dedede}`,
 `<svg width="1241" height="1755"><text transform="translate(266 1365) rotate(-45) scale(.92 1.010)">W</text><text transform="translate(961.500 673) rotate(-45) scale(.925 1.020)">M</text></svg>`);

const S={f:SERIF};
el('page-header',`:host{height:62px}`,
 R(108,63,1068,51,'',[T(128.500,87.500,102.700,24,'USIT6P4',{f:SERIF,s:'font-weight:bold;color:#002060'}),T(565,593.500,102.700,27.500,'Principles of Geographic Information Systems Practical',{f:SERIF,s:'font-style:italic'})])+
 `<div style="margin:.5px 0 0 19px;width:1036px;height:10.500px;background:#c0504d"></div>`);
el('page-footer',`:host{height:72px}`,
 R(108,1563,1068,72,'',[B(136,1572,950.500,10.500,'background:#7030a0'),
  B(1092.500,1563,56,54,'border-top:3px solid #9bbb59;border-bottom:10.500px solid #9bbb59;display:flex',row(1092.500,1566,[T(1093.500,32,1603,29.500,'41')]))])+
 `<div style="margin-top:-42px">`+R(108,1593,1068,42,'',[T(141,238,1622,26,'T.Y.B.Sc.(IT)SEMESTER-VI',S),T(451,571,1624,26,'Western College of Commerce &amp; Business Management',S)])+`</div>`);

el('doc-page',`:host{position:relative;width:1241px;height:1755px;padding:53px 0 0 97px}
 .o{width:1090px;height:1590px;border:6px solid #4f81bd;box-sizing:border-box;padding:2.500px}
 .i{position:relative;height:100%;box-sizing:border-box;border:2px solid #5b87bd}`,
 `<page-watermark></page-watermark><div class="o"><div class="i"><page-header></page-header>`+
 `<print-dialog style="margin:14.500px 0 0 92.500px"></print-dialog>`+
 R(108,359,1060,37,'',[I('bullet',162,368,16,20),T(197,385,385.700,25,'A new Print Layout window will open',S)])+
 `<layout-window style="margin-left:92.500px"></layout-window>`+
 R(108,1206,1060,70,'',[I('bullet',162,1214,16,19),T(197.500,162,1231.700,25,'Select Add Item',S),T(366.500,22,1232.500,28,'→',{f:SERIF,s:'font-family:"DejaVu Sans",sans-serif;font-weight:bold'}),T(396,95.500,1231.700,25,'Add Map',S)])+
 `<menu-closeup style="margin-left:92.500px"></menu-closeup><page-footer style="margin-top:130px"></page-footer></div></div>`);
</script>
</body>
</html>
